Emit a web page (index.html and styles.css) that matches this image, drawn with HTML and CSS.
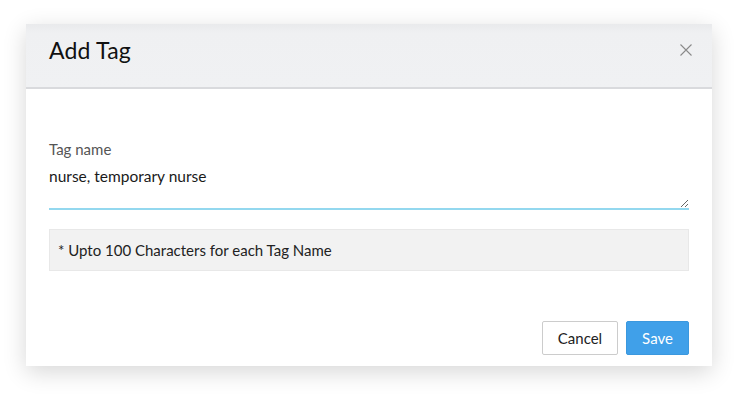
FILE: index.html
```html
<!DOCTYPE html>
<html>
  <head>
    <title>Add Tag</title>
    <link rel="stylesheet" href="styles.css">
  </head>
  <body>
    <div class="dialog">
      <header class="dialog-header">
        <h1 class="dialog-title">Add Tag</h1>
        <button class="close-button" aria-label="Close">
          <svg viewBox="0 0 12 12" width="12" height="12">
            <path d="M0.5 0.5 L11.5 11.5 M11.5 0.5 L0.5 11.5" stroke="#8a8a8a" stroke-width="1.1" fill="none" />
          </svg>
        </button>
      </header>

      <div class="dialog-body">
        <label class="field-label" for="tagInput">Tag name</label>
        <textarea class="field-input" id="tagInput">nurse, temporary nurse</textarea>
        <div class="field-note">* Upto 100 Characters for each Tag Name</div>
      </div>

      <footer class="dialog-footer">
        <button class="cancel-button">Cancel</button>
        <button class="save-button">Save</button>
      </footer>
    </div>
  </body>
</html>
```

FILE: styles.css
```css
* {
  margin: 0;
  padding: 0;
  box-sizing: border-box;
  font-family: "Lato", "Open Sans", sans-serif;
}

body {
  width: 738px;
  height: 395px;
  padding: 24px 26px;
  background: #ffffff;
}

.dialog {
  width: 686px;
  height: 342px;
  background: #ffffff;
  box-shadow: 0 6px 22px rgba(0, 0, 0, 0.16);
  display: flex;
  flex-direction: column;
}

.dialog-header {
  height: 65px;
  display: flex;
  align-items: center;
  justify-content: space-between;
  padding: 0 20px 11px 23px;
  background: linear-gradient(180deg, #e9eaec 0px, #eff0f2 9px, #f0f1f3 100%);
  border-bottom: 2px solid #d9dadd;
}

.dialog-title {
  font-size: 23px;
  font-weight: 400;
  color: #111111;
  letter-spacing: 0.2px;
}

.close-button {
  background: transparent;
  border: none;
  width: 12px;
  height: 12px;
  display: flex;
  cursor: pointer;
}

.dialog-body {
  flex: 1;
  padding: 51px 23px 0 23px;
}

.field-label {
  display: block;
  font-size: 15px;
  color: #555555;
  margin-bottom: 8px;
}

.field-input {
  display: block;
  width: 100%;
  height: 44px;
  border: none;
  border-bottom: 2px solid #93d8ef;
  font-size: 15.5px;
  color: #1a1a1a;
  resize: vertical;
  outline: none;
  padding: 0;
  line-height: 20px;
}

.field-note {
  margin-top: 19px;
  height: 42px;
  display: flex;
  align-items: center;
  padding: 0 8px;
  background: #f2f2f2;
  border: 1px solid #e8e8e8;
  font-size: 15px;
  color: #222222;
}

.dialog-footer {
  display: flex;
  justify-content: flex-end;
  gap: 8px;
  padding: 0 23px 11px 23px;
}

.cancel-button {
  width: 76px;
  height: 34px;
  background: #ffffff;
  border: 1px solid #cccccc;
  border-radius: 2px;
  font-size: 15px;
  color: #222222;
  cursor: pointer;
}

.save-button {
  width: 63px;
  height: 34px;
  background: #40a0e9;
  border: 1px solid #3b98de;
  border-radius: 2px;
  font-size: 15px;
  color: #ffffff;
  cursor: pointer;
}
```
